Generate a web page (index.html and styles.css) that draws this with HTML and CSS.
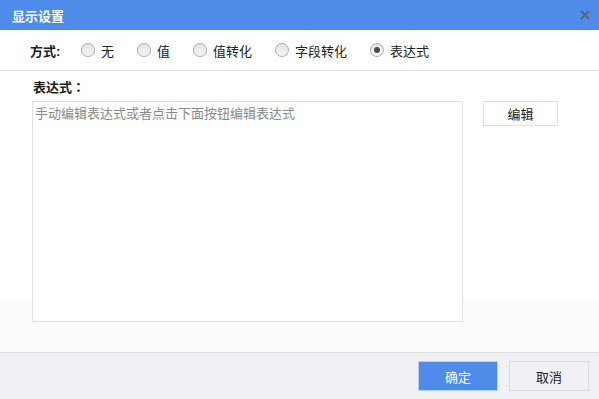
FILE: index.html
```html
<!DOCTYPE html>
<html>
<head>
  <meta charset="UTF-8">
  <title>显示设置</title>
  <link rel="stylesheet" href="styles.css">
</head>
<body>
  <div class="dialog">
    <div class="titlebar">
      <span class="title">显示设置</span>
      <span class="close">
        <svg width="10" height="10" viewBox="0 0 10 10"><path d="M1 1 L9 9 M9 1 L1 9" stroke="#5b6574" stroke-width="2"/></svg>
      </span>
    </div>

    <div class="mode-row">
      <span class="mode-label">方式:</span>
      <label class="option"><span class="radio"></span>无</label>
      <label class="option"><span class="radio"></span>值</label>
      <label class="option"><span class="radio"></span>值转化</label>
      <label class="option"><span class="radio"></span>字段转化</label>
      <label class="option"><span class="radio checked"></span>表达式</label>
    </div>

    <div class="content">
      <div class="expr-label">表达式<span class="colon">：</span></div>
      <div class="expr-row">
        <div class="expr-box">手动编辑表达式或者点击下面按钮编辑表达式</div>
        <button class="btn-edit">编辑</button>
      </div>
    </div>

    <div class="footer">
      <button class="btn btn-ok">确定</button>
      <button class="btn btn-cancel">取消</button>
    </div>
  </div>
</body>
</html>
```

FILE: styles.css
```css
* {
  box-sizing: border-box;
}

body {
  margin: 0;
  font-family: "Liberation Sans", "Noto Sans CJK SC", sans-serif;
  font-size: 13px;
  color: #222;
}

.dialog {
  width: 599px;
  height: 399px;
  display: flex;
  flex-direction: column;
  background: #fff;
}

.titlebar {
  height: 30px;
  flex-shrink: 0;
  background-color: #4f8ce9;
  display: flex;
  align-items: center;
  justify-content: space-between;
  padding: 0 9px 0 12px;
}

.title {
  color: #fff;
  font-weight: bold;
  font-size: 13px;
}

.close {
  display: flex;
}

.mode-row {
  height: 41px;
  flex-shrink: 0;
  display: flex;
  align-items: center;
  padding-left: 30px;
  border-bottom: 1px solid #dfe3e8;
}

.mode-label {
  width: 51px;
  font-weight: bold;
}

.option {
  display: flex;
  align-items: center;
  gap: 6px;
  margin-right: 23px;
}

.radio {
  width: 14px;
  height: 14px;
  border-radius: 50%;
  border: 1px solid #a9adb3;
  background: linear-gradient(#e2e3e5, #f6f6f7);
  display: flex;
  align-items: center;
  justify-content: center;
}

.radio.checked::after {
  content: "";
  width: 6px;
  height: 6px;
  border-radius: 50%;
  background: #4a4d52;
}

.content {
  flex: 1;
  padding: 7px 0 0 32px;
  background: linear-gradient(#fff 0, #fff 228px, #fafbfb 228px);
}

.expr-label {
  font-weight: bold;
  height: 18px;
  line-height: 18px;
  padding-left: 1px;
  margin-bottom: 5px;
}

.colon {
  font-family: "Noto Sans CJK TC", sans-serif;
}

.expr-row {
  display: flex;
  gap: 20px;
}

.expr-box {
  width: 431px;
  height: 221px;
  border: 1px solid #dde2e8;
  background: #fff;
  color: #8a8a8a;
  padding: 3px 2px;
  line-height: 17px;
}

.btn-edit {
  width: 75px;
  height: 25px;
  border: 1px solid #dde2e8;
  background: #fff;
  font: inherit;
  color: #222;
  padding: 0;
}

.footer {
  height: 47px;
  flex-shrink: 0;
  border-top: 1px solid #e1e3e6;
  background: #f0f1f5;
  display: flex;
  justify-content: flex-end;
  gap: 11px;
  padding: 8px 10px 0 0;
}

.btn {
  width: 80px;
  height: 30px;
  font: inherit;
  padding: 0;
}

.btn-ok {
  background: #4f8ce9;
  border: 1px solid #b9cff0;
  color: #fff;
}

.btn-cancel {
  background: #f0f1f5;
  border: 1px solid #d9dce1;
  color: #222;
}
```
